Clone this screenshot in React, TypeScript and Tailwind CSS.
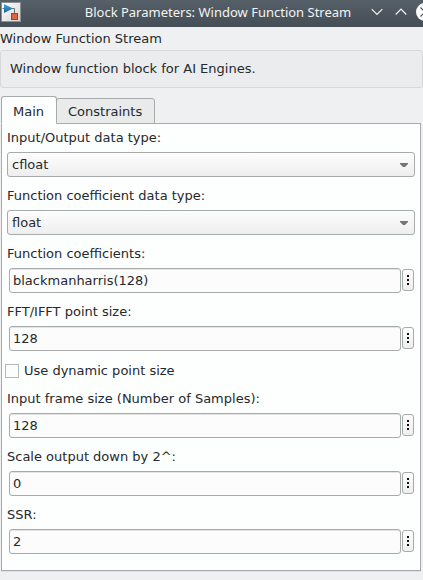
import { useState } from "react";
import type { ReactNode } from "react";

const BORDER = "border border-[#a8abab]";

function Label({ id, children }: { id: string; children: ReactNode }) {
  return (
    <label htmlFor={id} className="flex h-7 items-center">
      {children}
    </label>
  );
}

function SelectRow({ id, label, options }: { id: string; label: string; options: string[] }) {
  return (
    <div className="mb-[5px] flex flex-col px-[5px]">
      <Label id={id}>{label}</Label>
      <div className="relative flex">
        <select
          id={id}
          className={`h-[25px] w-full appearance-none rounded-[3px] ${BORDER} bg-linear-to-b from-[#fdfdfd] to-[#eeeeee] px-1 outline-none`}
        >
          {options.map((o) => (
            <option key={o}>{o}</option>
          ))}
        </select>
        <svg
          className="pointer-events-none absolute top-[11px] right-[7px]"
          width="8"
          height="4"
          viewBox="0 0 8 4"
          fill="#757575"
          aria-hidden="true"
        >
          <path d="M0 0h8v1L5 4H3L0 1z" />
        </svg>
      </div>
    </div>
  );
}

function EditRow({ id, label, value }: { id: string; label: string; value: string }) {
  const [text, setText] = useState(value);
  return (
    <div className="mb-[5px] flex flex-col px-[5px]">
      <Label id={id}>{label}</Label>
      <div className="flex items-start pr-px pl-0.5">
        <input
          id={id}
          type="text"
          value={text}
          onChange={(e) => setText(e.target.value)}
          className={`h-[25px] min-w-0 flex-1 rounded-[3px] ${BORDER} bg-[#fcfcfc] px-[3px] shadow-[inset_0_1px_0_#e4e4e4] outline-none`}
        />
        <button
          type="button"
          aria-label={`${label} options`}
          className={`mt-px ml-px flex h-[22px] w-3 items-center justify-center rounded-[3px] ${BORDER} bg-linear-to-b from-[#fdfdfd] to-[#eeeeee]`}
        >
          <svg width="2" height="10" viewBox="0 0 2 10" fill="#111" shapeRendering="crispEdges" aria-hidden="true">
            <path d="M0 0h2v2H0zM0 4h2v2H0zM0 8h2v2H0z" />
          </svg>
        </button>
      </div>
    </div>
  );
}

function AppIcon() {
  return (
    <svg width="20" height="20" viewBox="0 0 20 20" aria-hidden="true">
      <defs>
        <linearGradient id="paper" x1="0" y1="0" x2="1" y2="1">
          <stop offset="0" stopColor="#ffffff" />
          <stop offset="1" stopColor="#d5d5d5" />
        </linearGradient>
        <linearGradient id="blue" x1="0" y1="0" x2="0" y2="1">
          <stop offset="0" stopColor="#4aa6d2" />
          <stop offset="1" stopColor="#14639a" />
        </linearGradient>
      </defs>
      <rect x="0.5" y="0.5" width="19" height="19" fill="url(#paper)" stroke="#8d9092" />
      <path d="M1.500 6.500h2M11 6.500h2.500V11" fill="none" stroke="#6a7276" />
      <path d="M3 2 12 6.500 3 11z" fill="url(#blue)" />
      <rect x="10.500" y="11.500" width="6" height="6" fill="#e2643a" stroke="#b53a18" />
    </svg>
  );
}

export default function App() {
  const [tab, setTab] = useState("Main");
  const [dynamic, setDynamic] = useState(false);
  return (
    <div className="min-h-screen overflow-hidden bg-[#eff0f1] font-['DejaVu_Sans',sans-serif] text-[13px] leading-4 text-[#26292c]">
      <header className="flex h-[27px] items-center bg-linear-to-b from-[#566069] to-[#454d55] pb-[3px] pl-px text-[#f2f3f3]">
        <AppIcon />
        <h1 className="flex-1 pl-12 text-center font-['Noto_Sans',sans-serif] text-[13px]">
          Block Parameters: Window Function Stream
        </h1>
        <div className="-mr-3 flex items-center gap-1">
          <button type="button" aria-label="Minimize" className="flex size-5 items-center justify-center">
            <svg width="12" height="8" viewBox="0 0 12 8" fill="none" stroke="currentColor" strokeWidth="1.200">
              <path d="m.7 1.200 5.300 5.300 5.300-5.300" />
            </svg>
          </button>
          <button type="button" aria-label="Maximize" className="flex size-5 items-center justify-center">
            <svg width="12" height="8" viewBox="0 0 12 8" fill="none" stroke="currentColor" strokeWidth="1.200">
              <path d="M.7 6.500 6 1.200l5.300 5.300" />
            </svg>
          </button>
          <button type="button" aria-label="Close" className="flex size-5 items-center justify-center">
            <svg width="18" height="18" viewBox="0 0 18 18">
              <circle cx="9" cy="9" r="9" fill="#fcfcfc" />
              <path d="m4.500 4.500 9 9m0-9-9 9" stroke="#475057" strokeWidth="1.200" />
            </svg>
          </button>
        </div>
      </header>

      <h2 className="flex h-[23px] items-center">Window Function Stream</h2>
      <p className="flex h-[38px] items-center rounded-[3px] border border-[#d6d8d9] bg-[#ebecee] px-[9px]">
        Window function block for AI Engines.
      </p>

      <main className="mt-2 pr-0.5 pl-px">
        <div role="tablist" className="flex h-7 items-end">
          {["Main", "Constraints"].map((name) => (
            <button
              key={name}
              type="button"
              role="tab"
              aria-selected={tab === name}
              onClick={() => setTab(name)}
              className={
                tab === name
                  ? `relative h-7 rounded-t-[3px] ${BORDER} border-b-[#fdfefe] bg-[#fdfefe] pr-3 pl-[11px] pt-[3px]`
                  : `-ml-px h-[26px] rounded-t-[3px] ${BORDER} bg-[#e9eaea] pt-px pr-3 pl-[11px]`
              }
            >
              {name}
            </button>
          ))}
        </div>
        <form className={`-mt-px ${BORDER} bg-[#fdfefe] pb-[11px] shadow-[0_1px_0_#dddfe0]`}>
          <SelectRow id="io" label="Input/Output data type:" options={["cfloat", "cint16", "cint32", "float"]} />
          <SelectRow id="coeffType" label="Function coefficient data type:" options={["float", "int16", "int32"]} />
          <EditRow id="coeffs" label="Function coefficients:" value="blackmanharris(128)" />
          <EditRow id="points" label="FFT/IFFT point size:" value="128" />
          <div className="flex h-[29px] items-center px-[3px]">
            <label className="flex items-center gap-[5px]">
              <input
                type="checkbox"
                checked={dynamic}
                onChange={(e) => setDynamic(e.target.checked)}
                className="size-3.5 appearance-none border border-[#b5b8b9] bg-[#fcfcfc] checked:bg-[#3daee9]"
              />
              Use dynamic point size
            </label>
          </div>
          <EditRow id="frame" label="Input frame size (Number of Samples):" value="128" />
          <EditRow id="scale" label="Scale output down by 2^:" value="0" />
          <EditRow id="ssr" label="SSR:" value="2" />
        </form>
      </main>
    </div>
  );
}
